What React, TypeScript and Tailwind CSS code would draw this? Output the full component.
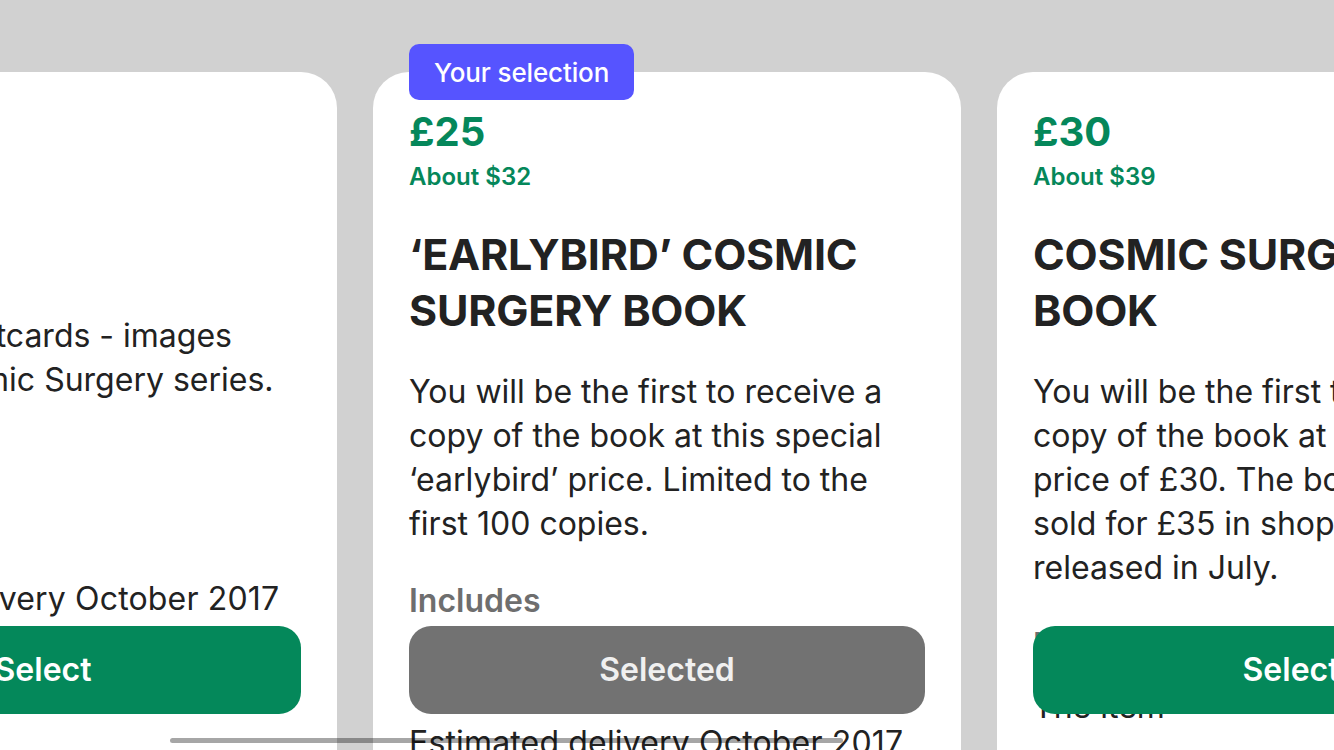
import clsx from "clsx";

type Tier = {
  price: string;
  about: string;
  title: string;
  description: string;
  items: string[];
  delivery: string;
  selected?: boolean;
};

const tiers: Tier[] = [
  {
    price: "£10",
    about: "About $13",
    title: "CARDS",
    description: "A set of 6 postcards - images from the Cosmic Surgery series.",
    items: ["Postcards"],
    delivery: "Estimated delivery October 2017",
  },
  {
    price: "£25",
    about: "About $32",
    title: "‘EARLYBIRD’ COSMIC SURGERY BOOK",
    description:
      "You will be the first to receive a copy of the book at this special ‘earlybird’ price. Limited to the first 100 copies.",
    items: ["The item"],
    delivery: "Estimated delivery October 2017",
    selected: true,
  },
  {
    price: "£30",
    about: "About $39",
    title: "COSMIC SURGERY BOOK",
    description:
      "You will be the first to receive a copy of the book at this special price of £30. The book will be sold for £35 in shops when it is released in July.",
    items: ["The item"],
    delivery: "Estimated delivery October 2017",
  },
];

const RewardCard = ({ tier }: { tier: Tier }) => {
  return (
    <div className="relative w-[588px] h-[720px] shrink-0 bg-white rounded-[36px] px-9 pt-9 text-[#222222]">
      {tier.selected && (
        <div className="absolute left-9 top-[-28px] h-14 px-[25px] flex items-center rounded-[10px] bg-[#5654ff] text-white text-[26px] font-medium tracking-[-0.005em]">
          Your selection
        </div>
      )}
      <p className="text-[40px] leading-[48px] font-bold text-[#05875a]">{tier.price}</p>
      <p className="mt-[5px] text-[24px] leading-8 font-semibold text-[#05875a]">{tier.about}</p>
      <h2 className="mt-[33px] text-[43px] leading-[56px] font-bold tracking-[-0.005em]">{tier.title}</h2>
      <p className="mt-8 text-[32px] leading-[44px]">{tier.description}</p>
      <p className="mt-[33px] text-[32px] leading-[44px] font-semibold text-[#6e6e6e]">Includes</p>
      <ul className="mt-[18px]">
        {tier.items.map((item, i) => (
          <li key={i} className="text-[32px] leading-[44px]">
            {item}
          </li>
        ))}
      </ul>
      <p className="mt-9 text-[32px] leading-[44px] tracking-[0.005em]">{tier.delivery}</p>
      <button
        className={clsx(
          "absolute left-9 right-9 top-[554px] h-[88px] rounded-[22px] text-[32px] font-semibold",
          tier.selected ? "bg-[#727272] text-[#f0f0f0]" : "bg-[#04885a] text-white"
        )}
      >
        {tier.selected ? "Selected" : "Select"}
      </button>
    </div>
  );
};

export default function App() {
  return (
    <div className="relative w-[1334px] h-[750px] overflow-hidden bg-[#d1d1d1] font-['Inter',sans-serif]">
      <div className="flex gap-9 ml-[-251px] pt-[72px]">
        {tiers.map((tier, i) => (
          <RewardCard key={i} tier={tier} />
        ))}
      </div>
      <div className="absolute left-[170px] top-[738px] w-[673px] h-[5px] rounded-full bg-black/35" />
    </div>
  );
}
